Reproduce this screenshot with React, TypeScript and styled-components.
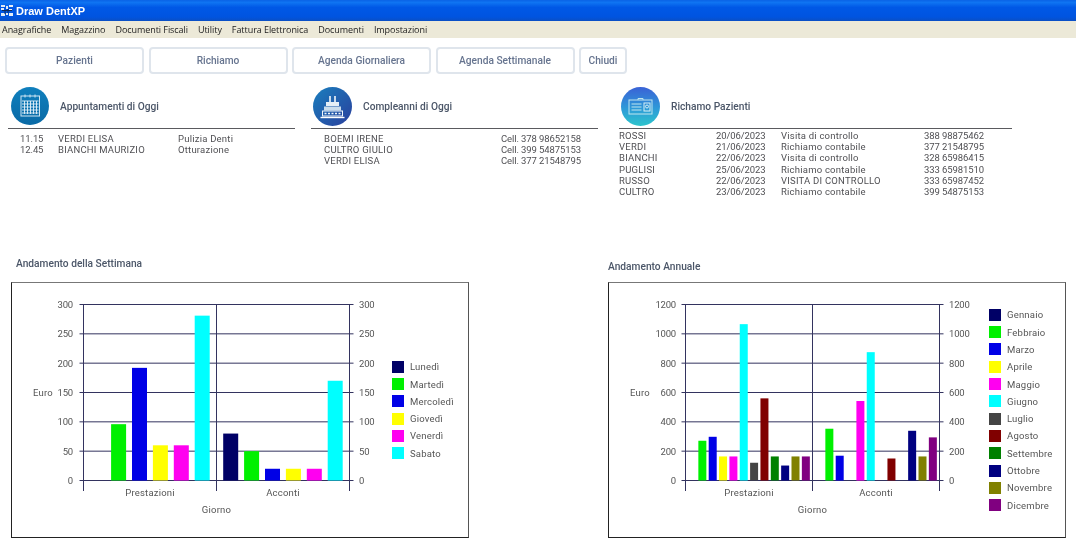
import React from "react";
import styled, { createGlobalStyle } from "styled-components";

const GlobalStyle = createGlobalStyle`
  html, body {
    margin: 0;
    padding: 0;
    background: #fff;
    overflow: hidden;
  }
  body {
    font-family: Roboto, "Liberation Sans", sans-serif;
  }
`;

const Page = styled.div`
  width: 1076px;
  height: 551px;
  display: flex;
  flex-direction: column;
  filter: blur(0.3px);
`;

const TitleBar = styled.div`
  height: 21px;
  display: flex;
  align-items: center;
  gap: 3px;
  padding-left: 1px;
  box-sizing: border-box;
  background: linear-gradient(180deg, #0a63e6 0%, #0f74f2 12%, #0058e6 35%, #0054e0 80%, #0a4fc4 100%);
  color: #fff;
  font-family: "Liberation Sans", sans-serif;
  font-weight: 700;
  font-size: 11px;
`;

const MenuBar = styled.div`
  height: 17px;
  display: flex;
  align-items: center;
  gap: 10px;
  padding-left: 2px;
  background: #ece9d8;
  color: #222;
  font-family: "Open Sans", sans-serif;
  font-size: 9px;
  letter-spacing: -0.06px;
`;

const Toolbar = styled.div`
  display: flex;
  gap: 4.5px;
  padding: 9px 5px 0;
`;

const ToolButton = styled.div<{ $width: number }>`
  width: ${(p) => p.$width}px;
  height: 27px;
  box-sizing: border-box;
  display: flex;
  align-items: center;
  justify-content: center;
  border: 2px solid #dfe5ec;
  border-radius: 4px;
  color: #66748f;
  font-size: 10.2px;
  font-weight: 500;
`;

const Summary = styled.div`
  display: flex;
  gap: 16px;
  padding: 13px 0 0 8px;
  height: 183px;
  box-sizing: border-box;
`;

const Panel = styled.section<{ $width: number; $offset?: number }>`
  width: ${(p) => p.$width}px;
  margin-left: ${(p) => p.$offset ?? 0}px;
`;

const PanelHead = styled.div<{ $pad: number }>`
  height: 41px;
  display: flex;
  align-items: flex-start;
  gap: 11px;
  padding-left: ${(p) => p.$pad}px;
  border-bottom: 1.5px solid #5a5a5e;
`;

const PanelTitle = styled.h2`
  margin: 14px 0 0;
  color: #4b5668;
  font-size: 10.2px;
  font-weight: 500;
`;

const Rows = styled.div<{ $columns: string; $top: number; $left: number; $right?: number; $rowHeight: number }>`
  display: grid;
  grid-template-columns: ${(p) => p.$columns};
  grid-auto-rows: ${(p) => p.$rowHeight}px;
  align-items: center;
  padding: ${(p) => p.$top}px ${(p) => p.$right ?? 0}px 0 ${(p) => p.$left}px;
  color: #505054;
  font-size: 9.5px;
  letter-spacing: 0.22px;
  white-space: nowrap;
`;

const Figure = styled.span`
  letter-spacing: -0.1px;
`;

const Charts = styled.div`
  display: flex;
  gap: 139px;
  padding-left: 11px;
`;

const ChartColumn = styled.div`
  width: 458px;
  display: flex;
  flex-direction: column;
`;

const ChartTitle = styled.h3<{ $indent: number; $top: number; $bottom: number }>`
  margin: ${(p) => p.$top}px 0 ${(p) => p.$bottom}px ${(p) => p.$indent}px;
  height: 13px;
  line-height: 13px;
  color: #4b5668;
  font-size: 10.2px;
  font-weight: 500;
`;

const ChartFrame = styled.div`
  height: 256px;
  box-sizing: border-box;
  display: flex;
  align-items: center;
  border: 1px solid #222;
  border-top-color: #777;
  border-right-color: #555;
`;

const PlotSvg = styled.svg`
  flex: none;
  width: 380px;
  height: 254px;
  font-family: Roboto, "Liberation Sans", sans-serif;
  font-size: 9.5px;
  letter-spacing: 0.2px;
`;

const Legend = styled.ul`
  margin: 0;
  padding: 0;
  list-style: none;
  display: flex;
  flex-direction: column;
  gap: 5.3px;
`;

const LegendItem = styled.li`
  height: 12px;
  display: flex;
  align-items: center;
  gap: 6px;
  color: #555;
  font-size: 9.5px;
  letter-spacing: 0.2px;
`;

const Swatch = styled.span<{ $color: string }>`
  width: 12px;
  height: 12px;
  background: ${(p) => p.$color};
`;

type Series = { name: string; color: string };

type ChartProps = {
  series: Series[];
  groups: { name: string; values: number[] }[];
  ticks: number[];
  left: number;
  groupWidth: number;
  pad: number;
  pitch: number;
  barWidth: number;
  labelEnd: number;
};

const TOP = 21.5;
const BASE = 197.5;
const AXIS_END = 208;
const LINE = "#33335f";
const LABEL = "#555";

const Chart = ({ series, groups, ticks, left, groupWidth, pad, pitch, barWidth, labelEnd }: ChartProps) => {
  const max = ticks[ticks.length - 1];
  const right = left + groupWidth * groups.length;
  const yOf = (v: number) => BASE - (v / max) * (BASE - TOP);

  return (
    <ChartFrame>
      <PlotSvg viewBox="0 0 380 254">
        {ticks.map((t) => (
          <g key={t}>
            <line x1={left - 4} x2={right + 4} y1={yOf(t)} y2={yOf(t)} stroke={LINE} />
            <text x={labelEnd} y={yOf(t) + 3.5} textAnchor="end" fill={LABEL} letterSpacing="-0.2">{t}</text>
            <text x={right + 9.5} y={yOf(t) + 3.5} fill={LABEL} letterSpacing="-0.2">{t}</text>
          </g>
        ))}
        {[0, 1, 2].map((i) => (
          <line
            key={i}
            x1={left + groupWidth * i}
            x2={left + groupWidth * i}
            y1={TOP}
            y2={AXIS_END}
            stroke={LINE}
          />
        ))}
        {groups.map((g, gi) => (
          <g key={g.name}>
            {g.values.map((v, i) =>
              v > 0 ? (
                <rect
                  key={series[i].name}
                  x={left + groupWidth * gi + pad + i * pitch}
                  y={yOf(v)}
                  width={barWidth}
                  height={BASE - yOf(v)}
                  fill={series[i].color}
                />
              ) : null
            )}
            <text x={left + groupWidth * (gi + 0.5)} y={213} textAnchor="middle" fill={LABEL}>{g.name}</text>
          </g>
        ))}
        <text x={21} y={113} fill={LABEL}>Euro</text>
        <text x={left + groupWidth} y={230} textAnchor="middle" fill={LABEL}>Giorno</text>
      </PlotSvg>
      <Legend>
        {series.map((s) => (
          <LegendItem key={s.name}>
            <Swatch $color={s.color} />
            {s.name}
          </LegendItem>
        ))}
      </Legend>
    </ChartFrame>
  );
};

const CalendarIcon = () => (
  <svg width="38" height="38" viewBox="0 0 38 38">
    <defs>
      <linearGradient id="calBg" x1="0" y1="0" x2="0" y2="1">
        <stop offset="0" stopColor="#0f7fbd" />
        <stop offset="1" stopColor="#0a6aa6" />
      </linearGradient>
    </defs>
    <circle cx="19" cy="19" r="19" fill="url(#calBg)" />
    <rect x="10" y="9" width="18.5" height="20" fill="none" stroke="#cfe6f3" strokeWidth="1" />
    <path d="M14 7.5v3M19 7.5v3M24 7.5v3" stroke="#cfe6f3" />
    <path
      d="M11 14h16.5M11 17h16.5M11 20h16.5M11 23h16.5M11 26h16.5M13.5 14v13M16.5 14v13M19.5 14v13M22.5 14v13M25.5 14v13"
      stroke="#e3f1f8"
      strokeWidth="0.9"
    />
  </svg>
);

const CakeIcon = () => (
  <svg width="39" height="39" viewBox="0 0 39 39">
    <defs>
      <linearGradient id="cakeBg" x1="0" y1="0" x2="1" y2="1">
        <stop offset="0" stopColor="#1a7fbe" />
        <stop offset="1" stopColor="#2a3f9c" />
      </linearGradient>
    </defs>
    <circle cx="19.5" cy="19.5" r="19.5" fill="url(#cakeBg)" />
    <path d="M17 9v6M22 9v6" stroke="#f2f7fb" strokeWidth="1.6" />
    <path d="M13 15h13v4H13z" fill="#e4eef6" />
    <path d="M11 19.5h17v4H11z" fill="#c9dcec" />
    <rect x="9.5" y="24" width="20" height="5" fill="none" stroke="#f2f7fb" />
    <path d="M11.5 26.5h2M15 26.5h2M18.5 26.5h2M22 26.5h2M25.5 26.5h2" stroke="#f2f7fb" strokeWidth="1.4" />
    <path d="M7.5 30.5h24" stroke="#fff" strokeWidth="1.4" />
  </svg>
);

const CardIcon = () => (
  <svg width="39" height="39" viewBox="0 0 39 39">
    <defs>
      <linearGradient id="cardBg" x1="0" y1="0" x2="0" y2="1">
        <stop offset="0" stopColor="#3a62d6" />
        <stop offset="0.55" stopColor="#2e9ad8" />
        <stop offset="1" stopColor="#2cc4cc" />
      </linearGradient>
    </defs>
    <circle cx="19.5" cy="19.5" r="19.5" fill="url(#cardBg)" />
    <rect x="8" y="13" width="23" height="14" fill="none" stroke="#bfe6ef" />
    <path d="M17 13v-1.5h5V13" fill="none" stroke="#bfe6ef" />
    <path d="M10.5 17h10M10.5 20h10M10.5 23h10" stroke="#bfe6ef" />
    <rect x="23" y="16" width="6" height="8" fill="none" stroke="#d7f0f5" />
    <circle cx="26" cy="19.5" r="1.5" fill="none" stroke="#d7f0f5" />
  </svg>
);

const AppIcon = () => (
  <svg width="12" height="12" viewBox="0 0 12 12">
    <path d="M0 0h4v2H0zM0 3h3v2H0zM5 1h2v3H5zM0 8h4v3H0zM5 8h2v2H5z" fill="#dfe9f5" />
    <path d="M8 0h4v2H8zM8 4h3v2H8zM8 8h4v3H8z" fill="#e8eef6" />
    <path d="M1 5.5h10M4 6v3M7 4v4" stroke="#0d2a5c" />
  </svg>
);

const menu = ["Anagrafiche", "Magazzino", "Documenti Fiscali", "Utility", "Fattura Elettronica", "Documenti", "Impostazioni"];

const buttons = [
  { label: "Pazienti", width: 139 },
  { label: "Richiamo", width: 139 },
  { label: "Agenda Giornaliera", width: 139 },
  { label: "Agenda Settimanale", width: 139 },
  { label: "Chiudi", width: 48 },
];

const appointments = [
  ["11.15", "VERDI ELISA", "Pulizia Denti"],
  ["12.45", "BIANCHI MAURIZIO", "Otturazione"],
];

const birthdays = [
  ["BOEMI IRENE", "Cell. 378 98652158"],
  ["CULTRO GIULIO", "Cell. 399 54875153"],
  ["VERDI ELISA", "Cell. 377 21548795"],
];

const recalls = [
  ["ROSSI", "20/06/2023", "Visita di controllo", "388 98875462"],
  ["VERDI", "21/06/2023", "Richiamo contabile", "377 21548795"],
  ["BIANCHI", "22/06/2023", "Visita di controllo", "328 65986415"],
  ["PUGLISI", "25/06/2023", "Richiamo contabile", "333 65981510"],
  ["RUSSO", "22/06/2023", "VISITA DI CONTROLLO", "333 65987452"],
  ["CULTRO", "23/06/2023", "Richiamo contabile", "399 54875153"],
];

const weekSeries: Series[] = [
  { name: "Lunedì", color: "#000066" },
  { name: "Martedì", color: "#00f000" },
  { name: "Mercoledì", color: "#0000e6" },
  { name: "Giovedì", color: "#ffff00" },
  { name: "Venerdì", color: "#ff00f0" },
  { name: "Sabato", color: "#00ffff" },
];

const yearSeries: Series[] = [
  { name: "Gennaio", color: "#000066" },
  { name: "Febbraio", color: "#00f000" },
  { name: "Marzo", color: "#0000e6" },
  { name: "Aprile", color: "#ffff00" },
  { name: "Maggio", color: "#ff00f0" },
  { name: "Giugno", color: "#00ffff" },
  { name: "Luglio", color: "#444444" },
  { name: "Agosto", color: "#800000" },
  { name: "Settembre", color: "#008000" },
  { name: "Ottobre", color: "#000080" },
  { name: "Novembre", color: "#808000" },
  { name: "Dicembre", color: "#800080" },
];

const weekGroups = [
  { name: "Prestazioni", values: [0, 96, 192, 60, 60, 281] },
  { name: "Acconti", values: [80, 50, 20, 20, 20, 170] },
];

const yearGroups = [
  { name: "Prestazioni", values: [0, 271, 298, 164, 164, 1066, 121, 560, 164, 102, 164, 164] },
  { name: "Acconti", values: [0, 353, 169, 0, 542, 875, 0, 150, 0, 339, 164, 294] },
];

export default function App() {
  return (
    <Page>
      <GlobalStyle />
      <TitleBar>
        <AppIcon />
        Draw DentXP
      </TitleBar>
      <MenuBar>
        {menu.map((m) => (
          <span key={m}>{m}</span>
        ))}
      </MenuBar>
      <Toolbar>
        {buttons.map((b) => (
          <ToolButton key={b.label} $width={b.width}>{b.label}</ToolButton>
        ))}
      </Toolbar>

      <Summary>
        <Panel $width={287}>
          <PanelHead $pad={3}>
            <CalendarIcon />
            <PanelTitle>Appuntamenti di Oggi</PanelTitle>
          </PanelHead>
          <Rows $columns="38px 120px 1fr" $top={3.5} $left={12} $rowHeight={11}>
            {appointments.map(([time, name, work]) => (
              <React.Fragment key={time}>
                <Figure>{time}</Figure>
                <span>{name}</span>
                <span>{work}</span>
              </React.Fragment>
            ))}
          </Rows>
        </Panel>
        <Panel $width={287}>
          <PanelHead $pad={2}>
            <CakeIcon />
            <PanelTitle>Compleanni di Oggi</PanelTitle>
          </PanelHead>
          <Rows $columns="1fr auto" $top={3.5} $left={13} $right={17} $rowHeight={11}>
            {birthdays.map(([name, phone]) => (
              <React.Fragment key={name}>
                <span>{name}</span>
                <Figure>{phone}</Figure>
              </React.Fragment>
            ))}
          </Rows>
        </Panel>
        <Panel $width={393} $offset={5}>
          <PanelHead $pad={2}>
            <CardIcon />
            <PanelTitle>Richamo Pazienti</PanelTitle>
          </PanelHead>
          <Rows $columns="97px 65px 143px 1fr" $top={0.5} $left={0} $rowHeight={11.3}>
            {recalls.map(([name, date, reason, phone]) => (
              <React.Fragment key={phone + date}>
                <span>{name}</span>
                <Figure>{date}</Figure>
                <span>{reason}</span>
                <Figure>{phone}</Figure>
              </React.Fragment>
            ))}
          </Rows>
        </Panel>
      </Summary>

      <Charts>
        <ChartColumn>
          <ChartTitle $indent={5} $top={0} $bottom={12}>Andamento della Settimana</ChartTitle>
          <Chart
            series={weekSeries}
            groups={weekGroups}
            ticks={[0, 50, 100, 150, 200, 250, 300]}
            left={71.5}
            groupWidth={133}
            pad={6.7}
            pitch={20.9}
            barWidth={15}
            labelEnd={61}
          />
        </ChartColumn>
        <ChartColumn>
          <ChartTitle $indent={0} $top={3} $bottom={9}>Andamento Annuale</ChartTitle>
          <Chart
            series={yearSeries}
            groups={yearGroups}
            ticks={[0, 200, 400, 600, 800, 1000, 1200]}
            left={76.5}
            groupWidth={127}
            pad={2.5}
            pitch={10.35}
            barWidth={8}
            labelEnd={67}
          />
        </ChartColumn>
      </Charts>
    </Page>
  );
}
